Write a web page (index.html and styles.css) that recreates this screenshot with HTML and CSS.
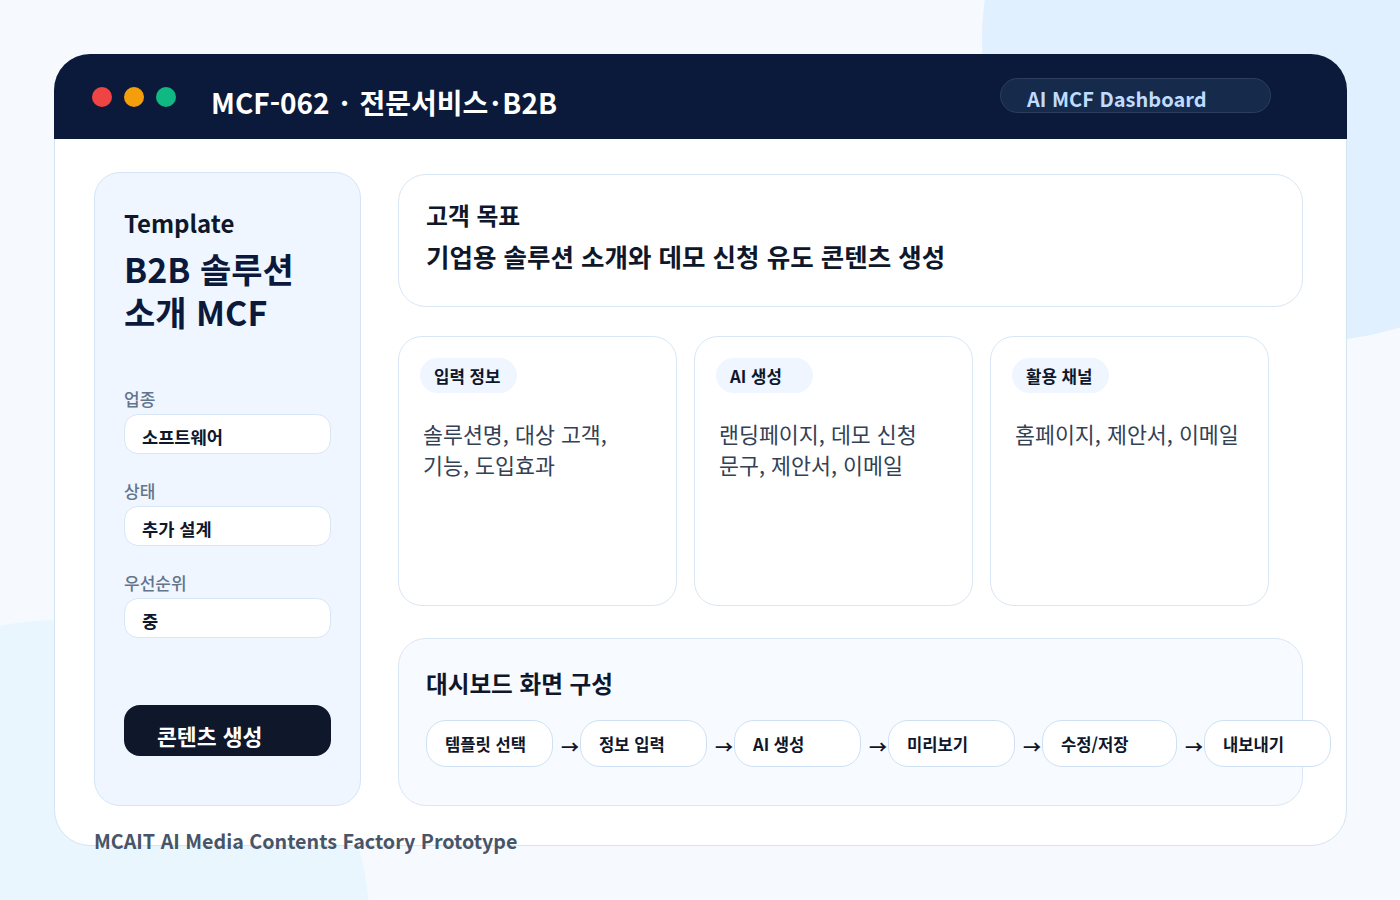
FILE: index.html
```html
<!DOCTYPE html>
<html lang="ko">
<head>
<meta charset="utf-8">
<title>MCF-062 · 전문서비스·B2B</title>
<link rel="stylesheet" href="styles.css">
</head>
<body>
<div class="bg-blob bg-blob-tr"></div>
<div class="bg-blob bg-blob-bl"></div>
<div class="window">
  <header class="win-header">
    <div class="dots">
      <span class="dot dot-red"></span>
      <span class="dot dot-amber"></span>
      <span class="dot dot-green"></span>
    </div>
    <h1 class="win-title">MCF-062 <span class="sep">·</span> 전문서비스<span class="sep">·</span>B2B</h1>
    <div class="badge">AI MCF Dashboard</div>
  </header>
  <div class="win-body">
    <aside class="sidebar">
      <div class="sb-kicker">Template</div>
      <div class="sb-title">B2B 솔루션<br>소개 MCF</div>
      <div class="fields">
        <div class="field-group">
          <div class="field-label">업종</div>
          <div class="field-box">소프트웨어</div>
        </div>
        <div class="field-group">
          <div class="field-label">상태</div>
          <div class="field-box">추가 설계</div>
        </div>
        <div class="field-group">
          <div class="field-label">우선순위</div>
          <div class="field-box">중</div>
        </div>
      </div>
      <button class="cta" type="button">콘텐츠 생성</button>
    </aside>
    <main class="main">
      <section class="goal-card">
        <div class="goal-label">고객 목표</div>
        <div class="goal-text">기업용 솔루션 소개와 데모 신청 유도 콘텐츠 생성</div>
      </section>
      <div class="info-row">
        <article class="info-card">
          <span class="chip">입력 정보</span>
          <p class="info-text">솔루션명, 대상 고객,<br>기능, 도입효과</p>
        </article>
        <article class="info-card">
          <span class="chip">AI 생성</span>
          <p class="info-text">랜딩페이지, 데모 신청<br>문구, 제안서, 이메일</p>
        </article>
        <article class="info-card">
          <span class="chip">활용 채널</span>
          <p class="info-text">홈페이지, 제안서, 이메일</p>
        </article>
      </div>
      <section class="flow">
        <h2 class="flow-title">대시보드 화면 구성</h2>
        <div class="flow-steps">
          <div class="step">템플릿 선택</div>
          <span class="arrow">→</span>
          <div class="step">정보 입력</div>
          <span class="arrow">→</span>
          <div class="step">AI 생성</div>
          <span class="arrow">→</span>
          <div class="step">미리보기</div>
          <span class="arrow">→</span>
          <div class="step step-wide">수정/저장</div>
          <span class="arrow">→</span>
          <div class="step">내보내기</div>
        </div>
      </section>
    </main>
  </div>
  <footer class="win-footer">MCAIT AI Media Contents Factory Prototype</footer>
</div>
</body>
</html>
```

FILE: styles.css
```css
* {
  box-sizing: border-box;
}

html, body {
  margin: 0;
}

body {
  position: relative;
  width: 1400px;
  height: 900px;
  overflow: hidden;
  padding: 54px 0 0 54px;
  background: #f6faff;
  font-family: "Noto Sans CJK KR", "Noto Sans", sans-serif;
  color: #0f172a;
}

/* decorative background shapes */
.bg-blob {
  position: absolute;
  border-radius: 50%;
  z-index: 0;
}

.bg-blob-tr {
  left: 982px;
  top: -262px;
  width: 640px;
  height: 604px;
  background: #e0f0fe;
}

.bg-blob-bl {
  left: -250px;
  top: 620px;
  width: 620px;
  height: 620px;
  background: #eaf6fe;
}

/* window */
.window {
  position: relative;
  z-index: 1;
  width: 1293px;
  height: 792px;
  background: #ffffff;
  border: 1px solid #d5e4f3;
  border-radius: 36px;
}

.win-header {
  display: flex;
  align-items: center;
  height: 85px;
  margin: -1px -1px 0;
  padding: 0 76px 0 38px;
  background: #0b1a3a;
  border-radius: 36px 36px 0 0;
}

.dots {
  display: flex;
  gap: 12px;
}

.dot {
  width: 20px;
  height: 20px;
  border-radius: 50%;
}

.dot-red { background: #ef4444; }
.dot-amber { background: #f59e0b; }
.dot-green { background: #10b981; }

.win-title {
  flex: 1;
  margin: 11px 0 0 35px;
  font-size: 28px;
  font-weight: 700;
  line-height: 34px;
  color: #ffffff;
}

.sep {
  margin: 0 2.5px;
}

.badge {
  width: 271px;
  height: 35px;
  margin-bottom: 2px;
  padding: 8px 0 0 26px;
  border: 1px solid #2b3e5f;
  border-radius: 18px;
  background: #162a4c;
  color: #bfdbfe;
  font-size: 20px;
  font-weight: 700;
  line-height: 24px;
}

/* body */
.win-body {
  display: flex;
  gap: 37px;
  padding: 33px 44px 0 39px;
}

.sidebar {
  flex-shrink: 0;
  display: flex;
  flex-direction: column;
  width: 267px;
  height: 634px;
  padding: 35px 29px 0 29px;
  background: #eff6ff;
  border: 1px solid #d6e5f6;
  border-radius: 26px;
}

.sb-kicker {
  font-size: 24px;
  font-weight: 700;
  line-height: 30px;
  color: #0f172a;
}

.sb-title {
  margin-top: 9px;
  font-size: 34px;
  font-weight: 700;
  line-height: 43px;
  color: #0b1a3a;
}

.fields {
  display: flex;
  flex-direction: column;
  gap: 26px;
  margin-top: 55px;
}

.field-label {
  margin-bottom: 4px;
  font-size: 17px;
  font-weight: 500;
  line-height: 22px;
  color: #64748b;
}

.field-box {
  height: 40px;
  padding: 7px 0 0 17px;
  background: #ffffff;
  border: 1px solid #d9e6f5;
  border-radius: 14px;
  font-size: 17.6px;
  font-weight: 700;
  line-height: 30px;
  color: #0f172a;
}

.cta {
  display: block;
  width: 207px;
  height: 51px;
  margin-top: 67px;
  padding: 10px 0 0 33px;
  border: 0;
  border-radius: 16px;
  background: #0f172a;
  color: #ffffff;
  font-family: "Noto Sans CJK KR", "Noto Sans", sans-serif;
  font-size: 21.6px;
  font-weight: 700;
  line-height: 36px;
  text-align: left;
}

/* main column */
.main {
  display: flex;
  flex-direction: column;
  width: 905px;
}

.goal-card {
  height: 133px;
  margin-top: 2px;
  padding: 25px 27px 0;
  background: #ffffff;
  border: 1px solid #d9e6f5;
  border-radius: 28px;
}

.goal-label {
  font-size: 23.8px;
  font-weight: 700;
  line-height: 30px;
  color: #0f172a;
}

.goal-text {
  margin-top: 10px;
  font-size: 25.5px;
  font-weight: 700;
  line-height: 32px;
  color: #0f172a;
}

.info-row {
  display: flex;
  gap: 17px;
  margin-top: 29px;
}

.info-card {
  display: flex;
  flex-direction: column;
  align-items: flex-start;
  width: 279px;
  height: 270px;
  padding: 21px 21px;
  background: #ffffff;
  border: 1px solid #d9e6f5;
  border-radius: 24px;
}

.chip {
  width: 97px;
  height: 35px;
  padding: 1px 0 0 14px;
  border-radius: 18px;
  background: #eff6ff;
  font-size: 16.8px;
  font-weight: 700;
  line-height: 34px;
  color: #0f172a;
}

.info-text {
  margin: 25px 0 0 3px;
  font-size: 21.7px;
  font-weight: 400;
  line-height: 31px;
  color: #334155;
}

.flow {
  height: 168px;
  margin-top: 32px;
  padding: 29px 0 0 27px;
  background: #f7fbff;
  border: 1px solid #d9e6f5;
  border-radius: 28px;
}

.flow-title {
  margin: 0;
  font-size: 23.6px;
  font-weight: 700;
  line-height: 30px;
  color: #0f172a;
}

.flow-steps {
  display: flex;
  align-items: center;
  margin-top: 22px;
}

.step {
  flex-shrink: 0;
  width: 127px;
  height: 47px;
  padding: 1px 0 0 18px;
  background: #ffffff;
  border: 1px solid #cfe0f4;
  border-radius: 20px;
  font-size: 16.6px;
  font-weight: 700;
  line-height: 44px;
  color: #0f172a;
}

.step-wide {
  width: 135px;
}

.arrow {
  flex-shrink: 0;
  width: 27px;
  padding: 4px 1px 0 0;
  text-align: right;
  font-size: 18px;
  font-weight: 700;
  line-height: 24px;
  color: #0f172a;
}

.win-footer {
  margin: 23px 0 0 39px;
  font-size: 19.7px;
  font-weight: 700;
  line-height: 24px;
  color: #475569;
}
```
